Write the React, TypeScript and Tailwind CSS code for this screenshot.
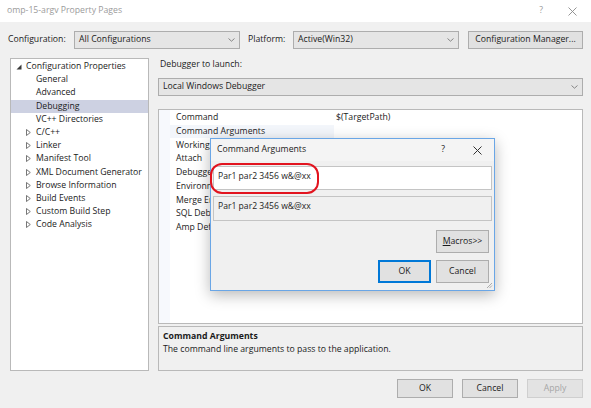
import React from 'react'

const treeItems: { label: string; indent: number; arrow?: 'open' | 'closed'; selected?: boolean }[] = [
	{ label: 'Configuration Properties', indent: 0, arrow: 'open' },
	{ label: 'General', indent: 1 },
	{ label: 'Advanced', indent: 1 },
	{ label: 'Debugging', indent: 1, selected: true },
	{ label: 'VC++ Directories', indent: 1 },
	{ label: 'C/C++', indent: 1, arrow: 'closed' },
	{ label: 'Linker', indent: 1, arrow: 'closed' },
	{ label: 'Manifest Tool', indent: 1, arrow: 'closed' },
	{ label: 'XML Document Generator', indent: 1, arrow: 'closed' },
	{ label: 'Browse Information', indent: 1, arrow: 'closed' },
	{ label: 'Build Events', indent: 1, arrow: 'closed' },
	{ label: 'Custom Build Step', indent: 1, arrow: 'closed' },
	{ label: 'Code Analysis', indent: 1, arrow: 'closed' },
]

const gridRows: [string, string][] = [
	['Command', '$(TargetPath)'],
	['Command Arguments', ''],
	['Working Directory', '$(ProjectDir)'],
	['Attach', 'No'],
	['Debugger Type', 'Auto'],
	['Environment', ''],
	['Merge Environment', 'Yes'],
	['SQL Debugging', 'No'],
	['Amp Default Accelerator', 'WARP software accelerator'],
]

function Chevron() {
	return (
		<svg width="7" height="4" viewBox="0 0 7 4" className="shrink-0">
			<path d="M0.5 0.5 L3.5 3.2 L6.5 0.5" fill="none" stroke="#7a7a7a" strokeWidth="0.9" />
		</svg>
	)
}

function Combo({ value, className }: { value: string; className: string }) {
	return (
		<div className={`h-[18px] flex items-center justify-between px-[4px] bg-[#e5e5e5] border border-[#adadad] text-[#1b1b1b] ${className}`}>
			<span>{value}</span>
			<Chevron />
		</div>
	)
}

function Button({ children, className = '', disabled = false }: { children: React.ReactNode; className?: string; disabled?: boolean }) {
	return (
		<div
			className={`flex items-center justify-center border ${
				disabled ? 'bg-[#e3e3e3] border-[#cfcfcf] text-[#a6a6a6]' : 'bg-[#e1e1e1] border-[#adadad] text-[#1b1b1b]'
			} ${className}`}
		>
			{children}
		</div>
	)
}

export default function App() {
	return (
		<div
			className="relative w-[591px] h-[408px] bg-[#f0f0f0] overflow-hidden text-[8.7px] text-[#1b1b1b] flex flex-col"
			style={{ fontFamily: '"Open Sans", "Noto Sans", sans-serif' }}
		>
			{/* title bar */}
			<div className="h-[22px] bg-white flex items-center pl-[7px] pr-[14px] text-[#9b9b9b] shrink-0">
				<span className="flex-1">omp-15-argv Property Pages</span>
				<span className="w-[10px] text-center mr-[22px]">?</span>
				<svg width="9" height="9" viewBox="0 0 9 9">
					<path d="M0.5 0.5 L8.5 8.5 M8.5 0.5 L0.5 8.5" stroke="#8a8a8a" strokeWidth="0.9" />
				</svg>
			</div>

			{/* configuration row */}
			<div className="flex items-center mt-[9px] pl-[8px] h-[18px] shrink-0">
				<span className="w-[66px]">Configuration:</span>
				<Combo value="All Configurations" className="w-[166px]" />
				<span className="ml-[8px] w-[45px]">Platform:</span>
				<Combo value="Active(Win32)" className="w-[166px]" />
				<Button className="ml-[9px] w-[115px] h-[18px]">Configuration Manager...</Button>
			</div>

			{/* body */}
			<div className="flex mt-[9px] pl-[10px] h-[313px] shrink-0">
				<div className="w-[139px] h-full bg-white border border-[#b9b9b9] pt-[1px]">
					{treeItems.map((it) => (
						<div
							key={it.label}
							className={`h-[13.2px] flex items-center whitespace-nowrap ${it.selected ? 'bg-[#cdd1e2]' : ''}`}
							style={{ paddingLeft: it.indent ? 15 : 5 }}
						>
							<span className="w-[9px] flex items-center shrink-0">
								{it.arrow === 'open' && (
									<svg width="6" height="6" viewBox="0 0 6 6">
										<path d="M5.5 0.5 L5.5 5.5 L0.5 5.5 Z" fill="#3a3a3a" />
									</svg>
								)}
								{it.arrow === 'closed' && (
									<svg width="5" height="7" viewBox="0 0 5 7">
										<path d="M0.5 0.5 L4.3 3.5 L0.5 6.5 Z" fill="none" stroke="#555" strokeWidth="0.8" />
									</svg>
								)}
							</span>
							<span className="ml-[1px]">{it.label}</span>
						</div>
					))}
				</div>

				<div className="ml-[9px] w-[425px] flex flex-col">
					<div className="h-[14px] flex items-center pl-[2px]">Debugger to launch:</div>
					<Combo value="Local Windows Debugger" className="mt-[6px] w-full" />

					{/* property grid */}
					<div className="mt-[13px] h-[217px] bg-white border border-[#b9b9b9] flex">
						<div className="w-[11px] bg-[#f7f9fd] shrink-0" />
						<div className="flex-1 pt-[1px]">
							{gridRows.map(([name, value], i) => (
								<div key={name} className="h-[13.75px] flex items-center whitespace-nowrap">
									<span className={`w-[164px] pl-[6px] h-full flex items-center ${i === 1 ? 'bg-[#f3f6fb]' : ''}`}>{name}</span>
									<span className="pl-[2px]">{value}</span>
								</div>
							))}
						</div>
					</div>

					{/* description */}
					<div className="mt-[2px] h-[45px] border border-[#b9b9b9] pl-[4px] pt-[3px] leading-[13px]">
						<div className="font-bold">Command Arguments</div>
						<div>The command line arguments to pass to the application.</div>
					</div>
				</div>
			</div>

			{/* bottom buttons */}
			<div className="flex justify-end gap-[9px] pr-[8px] mt-[8px]">
				<Button className="w-[56px] h-[19px]">OK</Button>
				<Button className="w-[56px] h-[19px]">Cancel</Button>
				<Button className="w-[56px] h-[19px]" disabled>
					Apply
				</Button>
			</div>

			{/* Command Arguments dialog */}
			<div className="absolute left-[210px] top-[138px] w-[285px] h-[153px] bg-[#f0f0f0] border border-[#6aa6e6] shadow-[0_4px_14px_rgba(0,0,0,0.28)] flex flex-col">
				<div className="h-[22px] flex items-center pl-[6px] pr-[12px] bg-[#f4f4f4]">
					<span className="flex-1">Command Arguments</span>
					<span className="mr-[28px]">?</span>
					<svg width="9" height="9" viewBox="0 0 9 9">
						<path d="M0.5 0.5 L8.5 8.5 M8.5 0.5 L0.5 8.5" stroke="#333" strokeWidth="1" />
					</svg>
				</div>
				<div className="mx-[2px] mt-[5px] h-[24px] bg-white border border-[#c4c4c4] pl-[4px] pt-[3px] leading-[13px] text-[8.6px]">Par1 par2 3456 w&amp;@xx</div>
				<div className="mx-[2px] mt-[6px] h-[25px] bg-[#f0f0f0] border border-[#c4c4c4] pl-[4px] pt-[3px] leading-[13px] text-[8.6px]">Par1 par2 3456 w&amp;@xx</div>
				<div className="flex justify-end pr-[5px] mt-[9px]">
					<Button className="w-[53px] h-[23px]">
						<span>
							<span className="underline">M</span>acros&gt;&gt;
						</span>
					</Button>
				</div>
				<div className="flex justify-end gap-[5px] pr-[5px] mt-[7px]">
					<Button className="w-[53px] h-[23px] !border-[#0078d7] border-2">OK</Button>
					<Button className="w-[53px] h-[23px]">Cancel</Button>
				</div>
				<svg width="7" height="7" viewBox="0 0 7 7" className="absolute right-[1px] bottom-[1px]">
					<path d="M6 1 L1 6 M6 3.5 L3.5 6" stroke="#9a9a9a" strokeWidth="0.8" />
				</svg>
			</div>

			{/* red highlight oval */}
			<div className="absolute left-[210px] top-[163px] w-[109px] h-[31px] rounded-[12px] border-[2.5px] border-[#e2141f]" />
		</div>
	)
}
